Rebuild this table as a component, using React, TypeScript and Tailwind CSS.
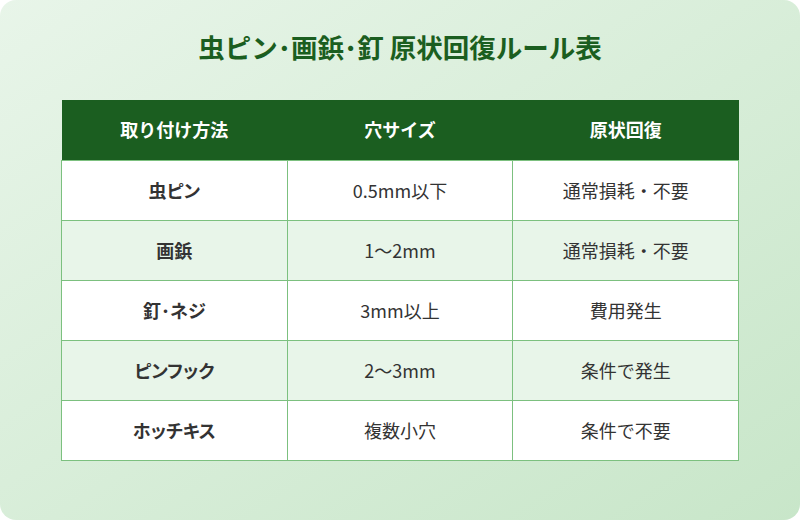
import React from 'react';

interface Row {
  method: string;
  size: string;
  restore: string;
}

const rows: Row[] = [
  { method: '虫ピン', size: '0.5mm以下', restore: '通常損耗・不要' },
  { method: '画鋲', size: '1〜2mm', restore: '通常損耗・不要' },
  { method: '釘･ネジ', size: '3mm以上', restore: '費用発生' },
  { method: 'ピンフック', size: '2〜3mm', restore: '条件で発生' },
  { method: 'ホッチキス', size: '複数小穴', restore: '条件で不要' },
];

const font = { fontFamily: '"Noto Sans CJK JP", "Noto Sans", sans-serif' };

export default function App() {
  return (
    <div className="w-[800px] h-[520px] bg-white">
      <div
        className="w-full h-full rounded-2xl bg-gradient-to-br from-[#e8f5e9] to-[#c8e6c9] flex flex-col items-center pt-[29px]"
        style={font}
      >
        <h1 className="text-[26.5px] leading-[36px] font-bold text-[#1b5e20]">
          虫ピン･画鋲･釘 原状回復ルール表
        </h1>
        <table className="mt-[35px] w-[678px] table-fixed border-collapse text-[18px]">
          <thead>
            <tr className="bg-[#1b5e20] text-white h-[60px]">
              <th className="font-bold">取り付け方法</th>
              <th className="font-bold">穴サイズ</th>
              <th className="font-bold">原状回復</th>
            </tr>
          </thead>
          <tbody>
            {rows.map((r, i) => (
              <tr key={r.method} className={`h-[60px] ${i % 2 === 1 ? 'bg-[#e8f5e9]' : 'bg-white'}`}>
                <td className="border border-[#7cc07f] text-center font-bold text-[#333] [font-feature-settings:'palt']">
                  {r.method}
                </td>
                <td className="border border-[#7cc07f] text-center text-[#333]">{r.size}</td>
                <td className="border border-[#7cc07f] text-center text-[#333]">{r.restore}</td>
              </tr>
            ))}
          </tbody>
        </table>
      </div>
    </div>
  );
}
